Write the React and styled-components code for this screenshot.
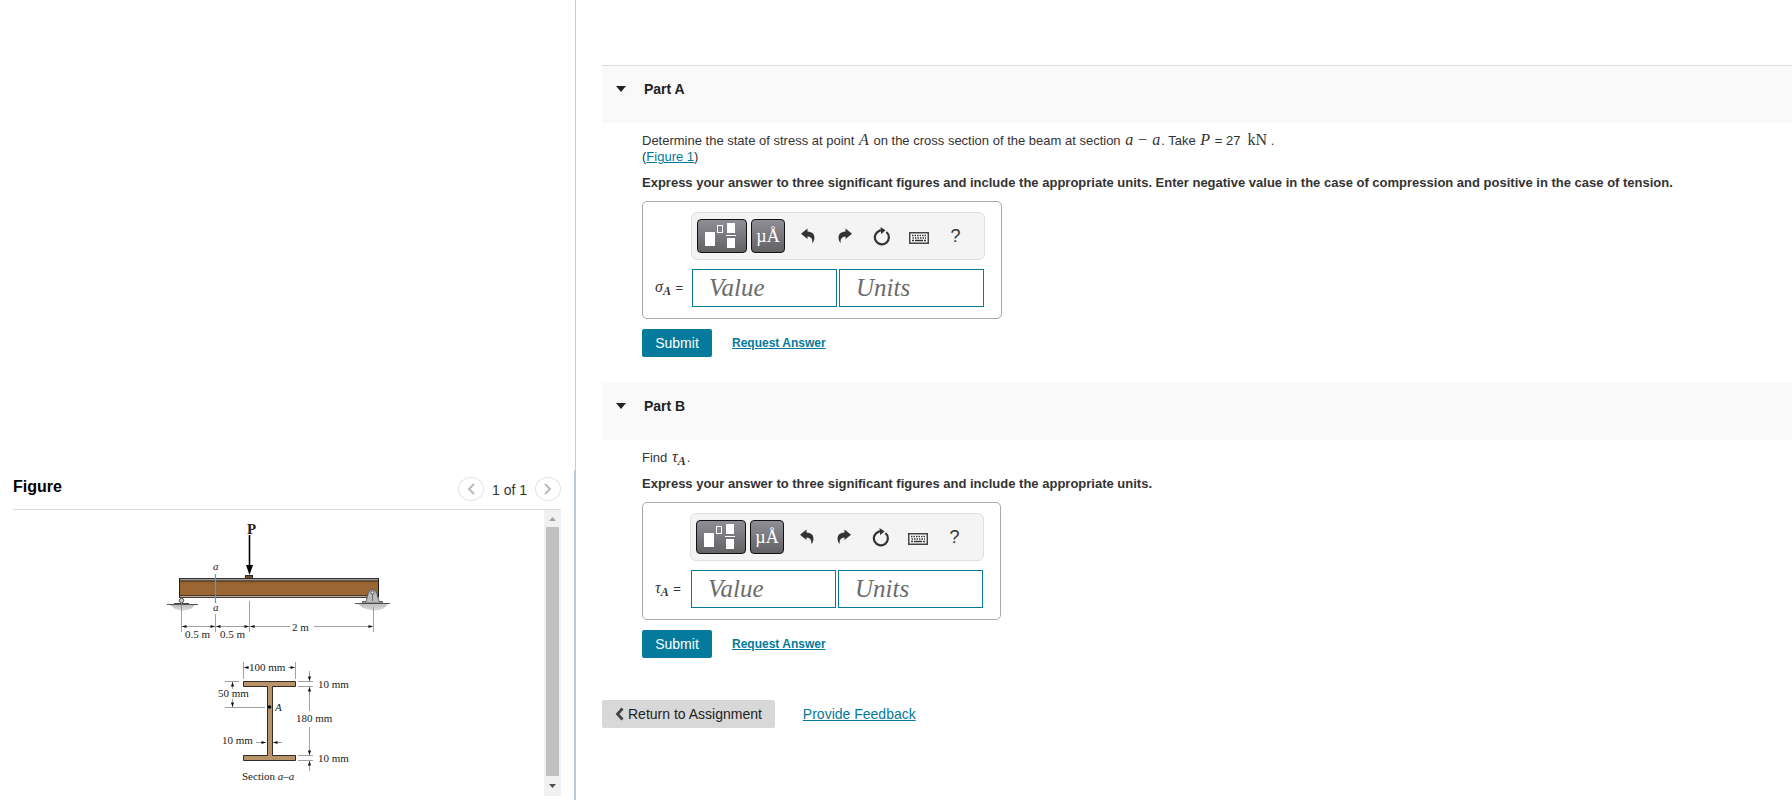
import React, { useState } from "react";
import styled, { createGlobalStyle } from "styled-components";

const GlobalStyle = createGlobalStyle`
  *, *::before, *::after { box-sizing: border-box; }
  body {
    margin: 0;
    background: #fff;
    color: #333;
    font: 13px/16px "Liberation Sans", Arial, sans-serif;
  }
  button, input { font-family: inherit; }
`;

const Page = styled.div`
  display: grid;
  grid-template-columns: 9fr 19fr;
  min-height: 100vh;
`;

const SideColumn = styled.aside`
  display: flex;
  flex-direction: column;
  justify-content: flex-end;
  border-right: 1px solid #b9cbdf;
`;

const FigurePanel = styled.section`
  display: flex;
  flex-direction: column;
  padding: 7px 13px 4px;
  border-right: 1px solid #b9cbdf;
`;

const FigureHeader = styled.header`
  display: flex;
  justify-content: space-between;
  align-items: flex-start;
  height: 33px;
  border-bottom: 1px solid #dcdcdc;
`;

const FigureTitle = styled.h2`
  margin: 0;
  color: #000;
  font-size: 16px;
  line-height: 20px;
`;

const Pager = styled.nav`
  display: flex;
  gap: 8px;
  color: #333;
  font-size: 14px;
  line-height: 26px;
`;

const RoundButton = styled.button`
  display: flex;
  align-items: center;
  justify-content: center;
  width: 26px;
  height: 24px;
  padding: 0;
  border: 1px solid #e4e4e4;
  border-radius: 50%;
  background: #fff;
  color: #bbb;
`;

const Viewer = styled.div`
  display: flex;
  height: 286px;
`;

const Drawing = styled.div`
  flex: 1;
  display: flex;
  justify-content: center;
`;

const ScrollTrack = styled.div`
  display: flex;
  flex-direction: column;
  align-items: center;
  width: 17px;
  background: #f1f1f1;
`;

const ScrollArrow = styled.button`
  display: flex;
  align-items: center;
  justify-content: center;
  width: 17px;
  height: ${(p) => (p.$end ? "20px" : "17px")};
  padding: 0;
  border: 0;
  background: transparent;
  color: ${(p) => (p.$end ? "#505050" : "#a3a3a3")};
`;

const ScrollThumb = styled.div`
  flex: 1;
  width: 13px;
  background: #c1c1c1;
`;

const Main = styled.main`
  min-width: 0;
  padding: 65px 0 72px 26px;
`;

const PartHeader = styled.header`
  height: ${(p) => (p.$first ? "58px" : "57px")};
  padding: 15px 14px;
  border-top: ${(p) => (p.$first ? "1px solid #dadedd" : "0")};
  background: #f9f9f9;
`;

const PartToggle = styled.button`
  display: flex;
  align-items: center;
  gap: 18px;
  padding: 0;
  border: 0;
  background: transparent;
  color: #222;
  font-size: 14px;
  font-weight: bold;
  line-height: 16px;
`;

const PartBody = styled.div`
  padding: 10px 16px 26px 40px;
`;

const Prompt = styled.p`
  margin: 0 0 10px;
  line-height: 16px;
`;

const Instruction = styled.p`
  margin: 0 0 10px;
  font-weight: bold;
  line-height: 16px;
`;

const MathText = styled.span`
  margin: ${(p) => (p.$upright ? "0" : "0 1px")};
  font-family: "Liberation Serif", "Times New Roman", serif;
  font-size: 16px;
  line-height: 0;
  font-style: ${(p) => (p.$upright ? "normal" : "italic")};

  sub {
    font-size: 12px;
    font-weight: bold;
    line-height: 0;
    vertical-align: -3px;
  }
`;

const TextLink = styled.a`
  color: #047a9c;
  font-size: ${(p) => p.$size || "13px"};
  font-weight: ${(p) => (p.$bold ? "bold" : "normal")};
`;

const AnswerBox = styled.div`
  display: flex;
  align-items: flex-end;
  width: fit-content;
  padding: 10px 16px 11px 11px;
  border: 1px solid #a8a8a8;
  border-radius: 5px;
`;

const AnswerLabel = styled.label`
  width: ${(p) => (p.$wide ? "37px" : "36px")};
  font-size: 13px;
  line-height: 38px;
  white-space: nowrap;
`;

const Editor = styled.div`
  display: flex;
  flex-direction: column;
  gap: 9px;
`;

const Toolbar = styled.div`
  display: flex;
  align-items: center;
  height: 48px;
  padding: 0 5px;
  border: 1px solid #dfdfdf;
  border-radius: 6px;
  background: #f4f4f4;
`;

const PaletteButton = styled.button`
  display: flex;
  align-items: center;
  justify-content: center;
  width: ${(p) => (p.$wide ? "50px" : "34px")};
  height: 34px;
  margin-right: 4px;
  padding: 0;
  border: 1px solid #111;
  border-radius: 4px;
  background: linear-gradient(#8f8e97, #626264);
  color: #fff;
  font: 18px/30px "Liberation Serif", "Times New Roman", serif;
`;

const ToolButton = styled.button`
  display: flex;
  align-items: center;
  justify-content: center;
  width: 37px;
  height: 34px;
  padding: 0;
  border: 0;
  background: transparent;
  color: #333;
  font-size: 18px;
`;

const Fields = styled.div`
  display: flex;
  gap: 2px;
  padding: 0 1px;
`;

const Field = styled.input`
  width: 145px;
  height: 38px;
  padding: 0 16px;
  border: 1px solid #047a9c;
  border-radius: 0;
  color: #333;
  font: italic 25px/34px "Liberation Serif", "Times New Roman", serif;

  &::placeholder {
    color: #6c6c6c;
    opacity: 1;
  }
`;

const Actions = styled.div`
  display: flex;
  align-items: center;
  gap: 20px;
  margin-top: 10px;
`;

const SubmitButton = styled.button`
  width: 70px;
  height: 28px;
  padding: 0;
  border: 0;
  border-radius: 2px;
  background: #047a9c;
  color: #fff;
  font-size: 14px;
`;

const Footer = styled.footer`
  display: flex;
  align-items: center;
  gap: 28px;
  margin-top: 16px;
`;

const ReturnButton = styled.button`
  display: flex;
  align-items: center;
  gap: 4px;
  height: 28px;
  padding: 0 13px;
  border: 0;
  border-radius: 2px;
  background: #d8d8d8;
  color: #222;
  font-size: 14px;
`;

const Chevron = ({ right }) => (
  <svg width="10" height="14" viewBox="0 0 10 14" aria-hidden="true">
    <path
      d={right ? "M2 2 L7 7 L2 12" : "M8 2 L3 7 L8 12"}
      fill="none"
      stroke="currentColor"
      strokeWidth="2"
    />
  </svg>
);

const Triangle = ({ up, width = 10, height = 6 }) => (
  <svg width={width} height={height} viewBox="0 0 10 6" preserveAspectRatio="none" aria-hidden="true">
    <path d={up ? "M0 6 L5 0 L10 6 Z" : "M0 0 L10 0 L5 6 Z"} fill="currentColor" />
  </svg>
);

const TemplateIcon = () => (
  <svg width="34" height="28" viewBox="0 0 34 28" aria-hidden="true">
    <g fill="#fff">
      <rect x="0" y="10" width="10" height="14" />
      <rect x="22" y="1" width="8" height="10" />
      <rect x="21" y="13" width="10" height="1" />
      <rect x="22" y="16" width="8" height="10" />
    </g>
    <rect x="12.5" y="3.5" width="5" height="7" fill="none" stroke="#fff" />
  </svg>
);

const TurnArrow = ({ flip }) => (
  <svg width="14" height="16" viewBox="0 0 14 16" aria-hidden="true">
    <path
      transform={flip ? "translate(14 0) scale(-1 1)" : undefined}
      d="M0 5.8 L6.5 0.6 V3.6 C11.5 3.8 13.8 6.8 13.4 10.4 C13.2 12.4 12.3 14 11.3 15.2 C11.8 11 10.4 8.6 6.5 8.4 V11 Z"
      fill="currentColor"
    />
  </svg>
);

const ResetIcon = () => (
  <svg width="18" height="19" viewBox="0 0 18 19" aria-hidden="true">
    <path d="M13.4 5 A7 7 0 1 1 7 3.6" fill="none" stroke="currentColor" strokeWidth="2.2" />
    <path d="M7.4 0 L12.6 3.2 L8 7.2 V4.6 L5.6 4.8 V2.8 L7.8 2.4 Z" fill="currentColor" />
  </svg>
);

const KeyboardIcon = () => (
  <svg width="20" height="16" viewBox="0 -4 20 16" aria-hidden="true">
    <rect x="0.75" y="0.75" width="18.5" height="10.5" fill="#fff" stroke="#444" strokeWidth="1.5" />
    <g stroke="#333" strokeWidth="1.4">
      <path d="M3 3.5 H17" strokeDasharray="1.5 1" />
      <path d="M3.5 6 H17" strokeDasharray="1.5 1" />
      <path d="M3 8.5 H5 M6 8.5 H14 M15 8.5 H17" />
    </g>
  </svg>
);

const Ink = styled.svg`
  text {
    font-family: "Liberation Serif", "Times New Roman", serif;
    font-size: 11px;
    fill: #222;
  }
  .italic { font-style: italic; }
  .force { font-size: 15px; font-weight: bold; }
`;

/* A dimension line from (x1,y1) to (x2,y2); the arrowhead sits at the second point. */
const Dim = ({ x1, y1, x2, y2 }) => {
  const angle = (Math.atan2(y2 - y1, x2 - x1) * 180) / Math.PI;
  return (
    <g>
      <path d={`M${x1} ${y1} L${x2} ${y2}`} stroke="#888" strokeWidth="0.8" />
      <path
        d="M0 0 L-4.5 -1.6 V1.6 Z"
        fill="#111"
        transform={`translate(${x2} ${y2}) rotate(${angle})`}
      />
    </g>
  );
};

const BeamFigure = () => (
  <Ink width="241" height="286" viewBox="158 510 241 286" role="img" aria-label="Beam and its cross section a–a">
    <defs>
      <linearGradient id="beam" x1="0" y1="0" x2="0" y2="1">
        <stop offset="0" stopColor="#875626" />
        <stop offset="0.35" stopColor="#9b6834" />
        <stop offset="1" stopColor="#9a6532" />
      </linearGradient>
      <linearGradient id="ground" x1="0" y1="0" x2="0" y2="1">
        <stop offset="0" stopColor="#bdbdbd" />
        <stop offset="1" stopColor="#dedede" />
      </linearGradient>
    </defs>

    <path d="M170 605 H195 L191 609 L182 611 L175 609 Z" fill="url(#ground)" />
    <path d="M167 604.5 H198" stroke="#555" />
    <path d="M174 603.5 H189" stroke="#444" />
    <path d="M358 604 H388 L383 609 L374 611 L363 608 Z" fill="url(#ground)" />
    <path d="M355 603.5 H390" stroke="#555" />

    <rect x="179.5" y="578.5" width="199" height="18.5" fill="url(#beam)" stroke="#222" />
    <rect x="180" y="578.5" width="198" height="2" fill="#999" />
    <path d="M179 578.5 H379 M179 581 H379" stroke="#292421" strokeWidth="0.8" />
    <rect x="180" y="595.5" width="188" height="2" fill="#bba999" />
    <path d="M179 595.5 H379 M179 597.5 H367" stroke="#30241a" strokeWidth="0.8" />
    <circle cx="181.5" cy="600.5" r="2.2" fill="#ccc" stroke="#444" strokeWidth="0.9" />
    <path d="M362.5 601.5 H366 L368.5 592 Q372.5 586.5 376.5 592 L379 601.5 H382.5 V603 H362.5 Z" fill="#b9bdbf" stroke="#444" strokeWidth="0.8" />
    <circle cx="372.5" cy="592.5" r="1.6" fill="#eee" stroke="#333" strokeWidth="0.8" />
    <path d="M372.5 594 V601" stroke="#555" strokeWidth="0.8" />
    <rect x="245.5" y="575.5" width="7" height="3" fill="#69513a" stroke="#332a20" />

    <text x="247" y="534" className="force">P</text>
    <path d="M249.5 535 V568" stroke="#000" strokeWidth="1.6" />
    <path d="M246 565 H253 L249.5 575 Z" fill="#000" />

    <text x="213" y="570" className="italic">a</text>
    <text x="213" y="611" className="italic">a</text>
    <path d="M215.5 574 V603" stroke="#2bb0d4" strokeWidth="1.2" />

    <g stroke="#888" strokeWidth="0.8">
      <path d="M181.5 602 V632 M215.5 614 V632 M249.5 601 V632 M373.5 607 V632" />
    </g>
    <Dim x1={198} y1={626.5} x2={182} y2={626.5} />
    <Dim x1={198} y1={626.5} x2={215} y2={626.5} />
    <Dim x1={232} y1={626.5} x2={216} y2={626.5} />
    <Dim x1={232} y1={626.5} x2={249} y2={626.5} />
    <Dim x1={290} y1={626.5} x2={250} y2={626.5} />
    <Dim x1={314} y1={626.5} x2={373} y2={626.5} />
    <text x="185" y="638">0.5 m</text>
    <text x="220" y="638">0.5 m</text>
    <text x="292" y="631">2 m</text>

    <path
      d="M243.5 681.5 H295.5 V686.5 H272.5 V755.5 H295.5 V760.5 H243.5 V755.5 H267.5 V686.5 H243.5 Z"
      fill="#b9946b"
      stroke="#332b24"
    />
    <circle cx="269.5" cy="707" r="1.8" fill="#000" />
    <text x="275" y="711" className="italic">A</text>

    <path d="M243.5 662 V679 M295.5 662 V679" stroke="#888" strokeWidth="0.8" />
    <Dim x1={249} y1={667.5} x2={244} y2={667.5} />
    <Dim x1={288} y1={667.5} x2={295} y2={667.5} />
    <text x="249" y="671">100 mm</text>

    <path d="M225 681.5 H239 M225 707.5 H265" stroke="#888" strokeWidth="0.8" />
    <Dim x1={232.5} y1={689} x2={232.5} y2={682} />
    <Dim x1={232.5} y1={699} x2={232.5} y2={707} />
    <text x="218" y="697">50 mm</text>

    <text x="222" y="744">10 mm</text>
    <Dim x1={256} y1={742.5} x2={266} y2={742.5} />
    <Dim x1={282} y1={742.5} x2={273} y2={742.5} />

    <path d="M298 681.5 H313 M298 686.5 H313 M298 755.5 H313 M298 760.5 H313" stroke="#888" strokeWidth="0.8" />
    <Dim x1={309.5} y1={671} x2={309.5} y2={681} />
    <Dim x1={309.5} y1={711} x2={309.5} y2={687} />
    <Dim x1={309.5} y1={727} x2={309.5} y2={755} />
    <Dim x1={309.5} y1={771} x2={309.5} y2={761} />
    <text x="318" y="688">10 mm</text>
    <text x="296" y="722">180 mm</text>
    <text x="318" y="762">10 mm</text>
    <text x="242" y="780">Section <tspan className="italic">a–a</tspan></text>
  </Ink>
);

function AnswerForm({ id, symbol, wide }) {
  return (
    <form onSubmit={(e) => e.preventDefault()}>
      <AnswerBox>
        <AnswerLabel htmlFor={`${id}-value`} $wide={wide}>
          <MathText>{symbol}<sub>A</sub></MathText> =
        </AnswerLabel>
        <Editor>
          <Toolbar role="toolbar" aria-label="Answer tools">
            <PaletteButton type="button" $wide aria-label="Templates"><TemplateIcon /></PaletteButton>
            <PaletteButton type="button" aria-label="Symbols">µÅ</PaletteButton>
            <ToolButton type="button" aria-label="Undo"><TurnArrow /></ToolButton>
            <ToolButton type="button" aria-label="Redo"><TurnArrow flip /></ToolButton>
            <ToolButton type="button" aria-label="Reset"><ResetIcon /></ToolButton>
            <ToolButton type="button" aria-label="Keyboard shortcuts"><KeyboardIcon /></ToolButton>
            <ToolButton type="button" aria-label="Help">?</ToolButton>
          </Toolbar>
          <Fields>
            <Field id={`${id}-value`} placeholder="Value" />
            <Field aria-label="Units" placeholder="Units" />
          </Fields>
        </Editor>
      </AnswerBox>
      <Actions>
        <SubmitButton type="submit">Submit</SubmitButton>
        <TextLink href="#answer" $bold $size="12px">Request Answer</TextLink>
      </Actions>
    </form>
  );
}

function Part({ title, first, children }) {
  const [open, setOpen] = useState(true);
  return (
    <section>
      <PartHeader $first={first}>
        <PartToggle type="button" aria-expanded={open} onClick={() => setOpen(!open)}>
          <Triangle />
          {title}
        </PartToggle>
      </PartHeader>
      {open && <PartBody>{children}</PartBody>}
    </section>
  );
}

export default function App() {
  return (
    <>
      <GlobalStyle />
      <Page>
        <SideColumn>
          <FigurePanel>
            <FigureHeader>
              <FigureTitle>Figure</FigureTitle>
              <Pager aria-label="Figures">
                <RoundButton type="button" aria-label="Previous figure"><Chevron /></RoundButton>
                <span>1 of 1</span>
                <RoundButton type="button" aria-label="Next figure"><Chevron right /></RoundButton>
              </Pager>
            </FigureHeader>
            <Viewer>
              <Drawing><BeamFigure /></Drawing>
              <ScrollTrack>
                <ScrollArrow type="button" aria-label="Scroll up"><Triangle up width={7} height={4} /></ScrollArrow>
                <ScrollThumb />
                <ScrollArrow type="button" $end aria-label="Scroll down"><Triangle width={7} height={4} /></ScrollArrow>
              </ScrollTrack>
            </Viewer>
          </FigurePanel>
        </SideColumn>
        <Main>
          <Part title="Part A" first>
            <Prompt>
              Determine the state of stress at point <MathText>A</MathText> on the cross section of the beam at
              section <MathText>a</MathText><MathText $upright> − </MathText><MathText>a</MathText>. Take{" "}
              <MathText>P</MathText> = 27 &nbsp;<MathText $upright>kN</MathText> .
              <br />
              (<TextLink href="#figure-1">Figure 1</TextLink>)
            </Prompt>
            <Instruction>
              Express your answer to three significant figures and include the appropriate units. Enter negative
              value in the case of compression and positive in the case of tension.
            </Instruction>
            <AnswerForm id="sigma" symbol="σ" wide />
          </Part>
          <Part title="Part B">
            <Prompt>Find <MathText>τ<sub>A</sub></MathText>.</Prompt>
            <Instruction>
              Express your answer to three significant figures and include the appropriate units.
            </Instruction>
            <AnswerForm id="tau" symbol="τ" />
          </Part>
          <Footer>
            <ReturnButton type="button">
              <svg width="9" height="14" viewBox="0 0 9 14" aria-hidden="true">
                <path d="M7.5 1.5 L2.5 7 L7.5 12.5" fill="none" stroke="#444" strokeWidth="2.8" />
              </svg>
              Return to Assignment
            </ReturnButton>
            <TextLink href="#feedback" $size="14px">Provide Feedback</TextLink>
          </Footer>
        </Main>
      </Page>
    </>
  );
}
